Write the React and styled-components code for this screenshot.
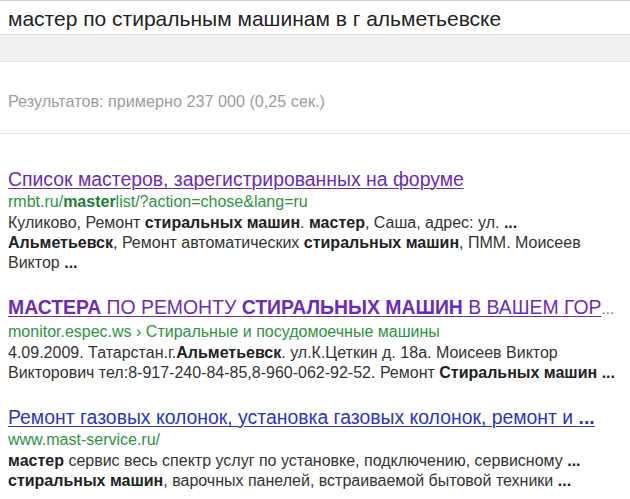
import React from 'react'
import styled, { createGlobalStyle } from 'styled-components'

const Global = createGlobalStyle`
body{
  margin:0;
  background:#fff;
  font-family:"Liberation Sans", Arial, sans-serif;
}
`

const results = [
  {
    title: [['Список мастеров, зарегистрированных на форуме', false]],
    visited: true,
    url: [['rmbt.ru/', false], ['master', true], ['list/?action=chose&lang=ru', false]],
    lines: [
      [['Куликово, Ремонт ', false], ['стиральных машин', true], ['. ', false], ['мастер', true], [', Саша, адрес: ул. ', false], ['...', true]],
      [['Альметьевск', true], [', Ремонт автоматических ', false], ['стиральных машин', true], [', ПММ. Моисеев', false]],
      [['Виктор ', false], ['...', true]],
    ],
  },
  {
    title: [['МАСТЕРА', true], [' ПО РЕМОНТУ ', false], ['СТИРАЛЬНЫХ МАШИН', true], [' В ВАШЕМ ГОР', false]],
    visited: true,
    tail: '...',
    url: [['monitor.espec.ws › Стиральные и посудомоечные машины', false]],
    lines: [
      [['4.09.2009. Татарстан.г.', false], ['Альметьевск', true], ['. ул.К.Цеткин д. 18а. Моисеев Виктор', false]],
      [['Викторович тел:8-917-240-84-85,8-960-062-92-52. Ремонт ', false], ['Стиральных машин ...', true]],
    ],
  },
  {
    title: [['Ремонт газовых колонок, установка газовых колонок, ремонт и ', false], ['...', true]],
    visited: false,
    url: [['www.mast-service.ru/', false]],
    lines: [
      [['мастер', true], [' сервис весь спектр услуг по установке, подключению, сервисному ', false], ['...', true]],
      [['стиральных машин', true], [', варочных панелей, встраиваемой бытовой техники ', false], ['...', true]],
    ],
  },
]

function Parts({ parts }) {
  return parts.map(([t, b], i) => (b ? <b key={i}>{t}</b> : <span key={i}>{t}</span>))
}

export default function App() {
  return (
    <Page>
      <Global />
      <SearchBox>мастер по стиральным машинам в г альметьевске</SearchBox>
      <Band />
      <Stats>Результатов: примерно 237 000 (0,25 сек.)</Stats>
      <List>
        {results.map((r, i) => (
          <Result key={i}>
            <Title>
              <TitleLink $visited={r.visited}>
                <Parts parts={r.title} />
              </TitleLink>
              {r.tail && <Tail>{r.tail}</Tail>}
            </Title>
            <Url>
              <Parts parts={r.url} />
            </Url>
            <Snippet>
              {r.lines.map((l, j) => (
                <div key={j}>
                  <Parts parts={l} />
                </div>
              ))}
            </Snippet>
          </Result>
        ))}
      </List>
    </Page>
  )
}

const Page = styled.div`
width:630px;
height:499px;
overflow:hidden;
`
const SearchBox = styled.div`
height:30px;
padding:3px 0 0 8px;
border-top:1px solid #cfcfcf;
border-bottom:1px solid #dedede;
font-size:21px;
line-height:30px;
color:#222;
white-space:nowrap;
`
const Band = styled.div`
height:26px;
background:#f1f1f1;
border-bottom:1px solid #e3e3e3;
`
const Stats = styled.div`
padding:29px 0 0 8px;
height:42px;
font-size:16.2px;
line-height:20px;
color:#9d9d9d;
border-bottom:1px solid #e8e8e8;
`
const List = styled.div`
padding:33px 0 0 8px;
display:flex;
flex-direction:column;
gap:22px;
`
const Result = styled.div`
display:flex;
flex-direction:column;
`
const Title = styled.div`
font-size:19.4px;
line-height:24px;
white-space:nowrap;
`
const TitleLink = styled.a`
color:${p => (p.$visited ? '#6c2bb8' : '#2b34c4')};
text-decoration:underline;
text-decoration-thickness:1px;
text-underline-offset:2px;
cursor:pointer;
`
const Tail = styled.span`
color:#666;
font-size:15px;
`
const Url = styled.div`
font-size:16px;
line-height:22px;
color:#2c9442;
white-space:nowrap;
b{color:#1d7d33;}
`
const Snippet = styled.div`
font-size:16px;
line-height:20px;
color:#333;
white-space:nowrap;
b{color:#222;}
`
